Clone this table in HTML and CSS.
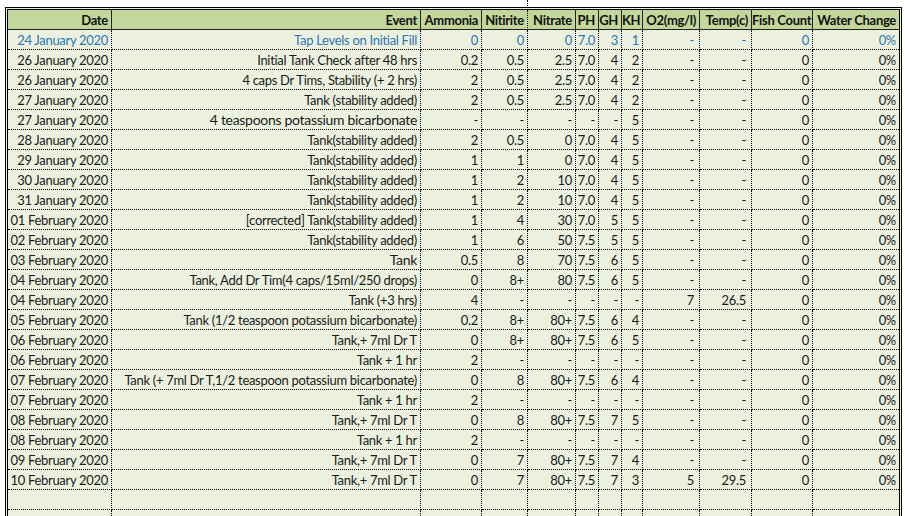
FILE: index.html
```html
<!DOCTYPE html>
<html>
<head>
<meta charset="utf-8">
<link rel="stylesheet" href="styles.css">
</head>
<body>
<div class="pagebreak"></div>
<div class="sheet">
  <div class="row head">
    <div class="c">Date</div><div class="c">Event</div><div class="c">Ammonia</div><div class="c">Nitirite</div><div class="c brk">Nitrate</div><div class="c">PH</div><div class="c">GH</div><div class="c">KH</div><div class="c">O2(mg/l)</div><div class="c">Temp(c)</div><div class="c">Fish Count</div><div class="c">Water Change</div>
  </div>
  <div class="row blue"><div class="c">24 January 2020</div><div class="c">Tap Levels on Initial Fill</div><div class="c">0</div><div class="c">0</div><div class="c">0</div><div class="c">7.0</div><div class="c">3</div><div class="c">1</div><div class="c w">-</div><div class="c w">-</div><div class="c">0</div><div class="c">0%</div></div>
  <div class="row"><div class="c">26 January 2020</div><div class="c">Initial Tank Check after 48 hrs</div><div class="c">0.2</div><div class="c">0.5</div><div class="c">2.5</div><div class="c">7.0</div><div class="c">4</div><div class="c">2</div><div class="c w">-</div><div class="c w">-</div><div class="c">0</div><div class="c">0%</div></div>
  <div class="row"><div class="c">26 January 2020</div><div class="c">4 caps Dr Tims, Stability (+ 2 hrs)</div><div class="c">2</div><div class="c">0.5</div><div class="c">2.5</div><div class="c">7.0</div><div class="c">4</div><div class="c">2</div><div class="c w">-</div><div class="c w">-</div><div class="c">0</div><div class="c">0%</div></div>
  <div class="row"><div class="c">27 January 2020</div><div class="c">Tank (stability added)</div><div class="c">2</div><div class="c">0.5</div><div class="c">2.5</div><div class="c">7.0</div><div class="c">4</div><div class="c">2</div><div class="c w">-</div><div class="c w">-</div><div class="c">0</div><div class="c">0%</div></div>
  <div class="row"><div class="c">27 January 2020</div><div class="c big">4 teaspoons potassium bicarbonate</div><div class="c">-</div><div class="c">-</div><div class="c">-</div><div class="c">-</div><div class="c">-</div><div class="c">5</div><div class="c w">-</div><div class="c w">-</div><div class="c">0</div><div class="c">0%</div></div>
  <div class="row"><div class="c">28 January 2020</div><div class="c">Tank(stability added)</div><div class="c">2</div><div class="c">0.5</div><div class="c">0</div><div class="c">7.0</div><div class="c">4</div><div class="c">5</div><div class="c w">-</div><div class="c w">-</div><div class="c">0</div><div class="c">0%</div></div>
  <div class="row"><div class="c">29 January 2020</div><div class="c">Tank(stability added)</div><div class="c">1</div><div class="c">1</div><div class="c">0</div><div class="c">7.0</div><div class="c">4</div><div class="c">5</div><div class="c w">-</div><div class="c w">-</div><div class="c">0</div><div class="c">0%</div></div>
  <div class="row"><div class="c">30 January 2020</div><div class="c">Tank(stability added)</div><div class="c">1</div><div class="c">2</div><div class="c">10</div><div class="c">7.0</div><div class="c">4</div><div class="c">5</div><div class="c w">-</div><div class="c w">-</div><div class="c">0</div><div class="c">0%</div></div>
  <div class="row"><div class="c">31 January 2020</div><div class="c">Tank(stability added)</div><div class="c">1</div><div class="c">2</div><div class="c">10</div><div class="c">7.0</div><div class="c">4</div><div class="c">5</div><div class="c w">-</div><div class="c w">-</div><div class="c">0</div><div class="c">0%</div></div>
  <div class="row"><div class="c">01 February 2020</div><div class="c">[corrected] Tank(stability added)</div><div class="c">1</div><div class="c">4</div><div class="c">30</div><div class="c">7.0</div><div class="c">5</div><div class="c">5</div><div class="c w">-</div><div class="c w">-</div><div class="c">0</div><div class="c">0%</div></div>
  <div class="row"><div class="c">02 February 2020</div><div class="c">Tank(stability added)</div><div class="c">1</div><div class="c">6</div><div class="c">50</div><div class="c">7.5</div><div class="c">5</div><div class="c">5</div><div class="c w">-</div><div class="c w">-</div><div class="c">0</div><div class="c">0%</div></div>
  <div class="row"><div class="c">03 February 2020</div><div class="c big">Tank</div><div class="c">0.5</div><div class="c">8</div><div class="c">70</div><div class="c">7.5</div><div class="c">6</div><div class="c">5</div><div class="c w">-</div><div class="c w">-</div><div class="c">0</div><div class="c">0%</div></div>
  <div class="row"><div class="c">04 February 2020</div><div class="c">Tank, Add Dr Tim(4 caps/15ml/250 drops)</div><div class="c">0</div><div class="c">8+</div><div class="c">80</div><div class="c">7.5</div><div class="c">6</div><div class="c">5</div><div class="c w">-</div><div class="c w">-</div><div class="c">0</div><div class="c">0%</div></div>
  <div class="row"><div class="c">04 February 2020</div><div class="c">Tank (+3 hrs)</div><div class="c">4</div><div class="c">-</div><div class="c">-</div><div class="c">-</div><div class="c">-</div><div class="c">-</div><div class="c w">7</div><div class="c w">26.5</div><div class="c">0</div><div class="c">0%</div></div>
  <div class="row"><div class="c">05 February 2020</div><div class="c">Tank (1/2 teaspoon potassium bicarbonate)</div><div class="c">0.2</div><div class="c">8+</div><div class="c">80+</div><div class="c">7.5</div><div class="c">6</div><div class="c">4</div><div class="c w">-</div><div class="c w">-</div><div class="c">0</div><div class="c">0%</div></div>
  <div class="row"><div class="c">06 February 2020</div><div class="c">Tank,+ 7ml Dr T</div><div class="c">0</div><div class="c">8+</div><div class="c">80+</div><div class="c">7.5</div><div class="c">6</div><div class="c">5</div><div class="c w">-</div><div class="c w">-</div><div class="c">0</div><div class="c">0%</div></div>
  <div class="row"><div class="c">06 February 2020</div><div class="c">Tank + 1 hr</div><div class="c">2</div><div class="c">-</div><div class="c">-</div><div class="c">-</div><div class="c">-</div><div class="c">-</div><div class="c w">-</div><div class="c w">-</div><div class="c">0</div><div class="c">0%</div></div>
  <div class="row"><div class="c">07 February 2020</div><div class="c">Tank (+ 7ml Dr T,1/2 teaspoon potassium bicarbonate)</div><div class="c">0</div><div class="c">8</div><div class="c">80+</div><div class="c">7.5</div><div class="c">6</div><div class="c">4</div><div class="c w">-</div><div class="c w">-</div><div class="c">0</div><div class="c">0%</div></div>
  <div class="row"><div class="c">07 February 2020</div><div class="c">Tank + 1 hr</div><div class="c">2</div><div class="c">-</div><div class="c">-</div><div class="c">-</div><div class="c">-</div><div class="c">-</div><div class="c w">-</div><div class="c w">-</div><div class="c">0</div><div class="c">0%</div></div>
  <div class="row"><div class="c">08 February 2020</div><div class="c">Tank,+ 7ml Dr T</div><div class="c">0</div><div class="c">8</div><div class="c">80+</div><div class="c">7.5</div><div class="c">7</div><div class="c">5</div><div class="c w">-</div><div class="c w">-</div><div class="c">0</div><div class="c">0%</div></div>
  <div class="row"><div class="c">08 February 2020</div><div class="c">Tank + 1 hr</div><div class="c">2</div><div class="c">-</div><div class="c">-</div><div class="c">-</div><div class="c">-</div><div class="c">-</div><div class="c w">-</div><div class="c w">-</div><div class="c">0</div><div class="c">0%</div></div>
  <div class="row"><div class="c">09 February 2020</div><div class="c">Tank,+ 7ml Dr T</div><div class="c">0</div><div class="c">7</div><div class="c">80+</div><div class="c">7.5</div><div class="c">7</div><div class="c">4</div><div class="c w">-</div><div class="c w">-</div><div class="c">0</div><div class="c">0%</div></div>
  <div class="row"><div class="c">10 February 2020</div><div class="c">Tank,+ 7ml Dr T</div><div class="c">0</div><div class="c">7</div><div class="c">80+</div><div class="c">7.5</div><div class="c">7</div><div class="c">3</div><div class="c w">5</div><div class="c w">29.5</div><div class="c">0</div><div class="c">0%</div></div>
  <div class="row"><div class="c"></div><div class="c"></div><div class="c"></div><div class="c"></div><div class="c"></div><div class="c"></div><div class="c"></div><div class="c"></div><div class="c"></div><div class="c"></div><div class="c"></div><div class="c"></div></div>
  <div class="row"><div class="c"></div><div class="c"></div><div class="c"></div><div class="c"></div><div class="c"></div><div class="c"></div><div class="c"></div><div class="c"></div><div class="c"></div><div class="c"></div><div class="c"></div><div class="c"></div></div>
</div>
</body>
</html>
```

FILE: styles.css
```css
html, body {
  margin: 0;
  padding: 0;
  background: #ffffff;
  overflow: hidden;
}
body {
  padding: 7px 0 0 5px;
  font-family: Lato, "Liberation Sans", sans-serif;
  font-size: 13px;
  letter-spacing: -0.3px;
  color: #1a1a1a;
  position: relative;
  height: 516px;
  box-sizing: border-box;
}
.pagebreak {
  position: absolute;
  left: 527px;
  top: 0;
  width: 0;
  height: 8px;
  border-left: 1px dotted #000;
}
.sheet {
  width: 891px;
  border-top: 3px double #000;
  border-left: 3px double #000;
  border-right: 3px double #000;
  background: #ebf1de;
}
.row {
  display: grid;
  grid-template-columns: 104px 309px 61px 46px 48px 23px 23px 21px 57px 52px 61px 86px;
  height: 20px;
}
.c {
  box-sizing: border-box;
  height: 20px;
  line-height: 20px;
  text-align: right;
  padding-right: 3px;
  white-space: nowrap;
  overflow: hidden;
  border-right: 1px dotted #000;
  border-bottom: 1px dotted #000;
}
.c:last-child {
  border-right: none;
}
.c.w {
  padding-right: 5px;
}
.big {
  font-size: 14px;
}
.head {
  background: #c4d79b;
}
.head .c {
  font-weight: bold;
  color: #111;
  border-right: 1px solid #222;
  border-bottom: 1px solid #222;
}
.head .c:last-child {
  border-right: none;
}
.head .c:nth-child(4) {
  border-right: 1px dotted #000;
}
.blue .c {
  color: #2e75b6;
}
```
